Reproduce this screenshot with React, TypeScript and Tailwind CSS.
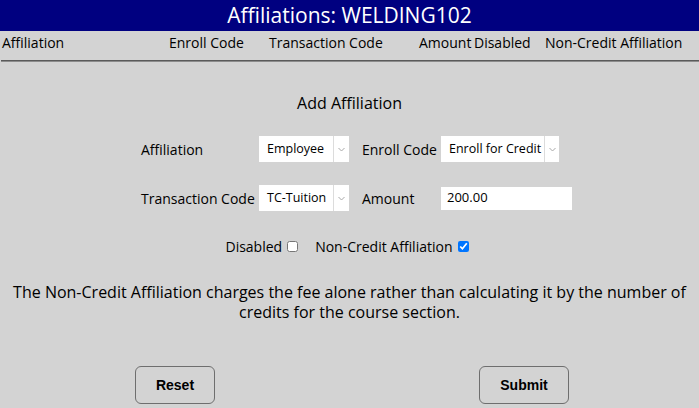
import React from "react";

const FONT = "font-['Open_Sans',sans-serif]";

function FakeSelect({ value, width, textWidth }: { value: string; width: string; textWidth: string }) {
  return (
    <div className={`flex h-[26px] ${width} bg-white`}>
      <div className={`${textWidth} flex items-center pl-[8px] text-[12.5px] text-black whitespace-nowrap overflow-hidden`}>
        {value}
      </div>
      <div className="flex flex-1 items-center justify-center border-l border-[#dcdcdc]">
        <svg width="7" height="5" viewBox="0 0 7 5" fill="none">
          <path d="M0.5 1L3.5 4L6.5 1" stroke="#a8a8a8" strokeWidth="1" />
        </svg>
      </div>
    </div>
  );
}

export default function App() {
  return (
    <div className={`w-[699px] h-[408px] bg-[#d3d3d3] text-black ${FONT} overflow-hidden`}>
      {/* title bar */}
      <div className="h-[31px] bg-[#000080] flex items-center justify-center">
        <span className="text-white text-[21px] leading-none">Affiliations: WELDING102</span>
      </div>

      {/* column headers */}
      <div className="flex h-[22px] items-center text-[14px] whitespace-nowrap">
        <span className="w-[169px] pl-[2px]">Affiliation</span>
        <span className="w-[100px]">Enroll Code</span>
        <span className="w-[150px]">Transaction Code</span>
        <span className="w-[55px]">Amount</span>
        <span className="w-[71px]">Disabled</span>
        <span>Non-Credit Affiliation</span>
      </div>
      <div className="mt-[7px] ml-[1px] h-[2px] bg-[#5a5a5a] border-b border-[#8c8c8c]" />

      <div className="mt-[30px] text-center text-[16px] leading-[22px]">Add Affiliation</div>

      {/* form grid */}
      <div className="mt-[22px] ml-[141px] grid grid-cols-[118px_103px_79px_auto] items-center gap-y-[23px] text-[14px]">
        <span>Affiliation</span>
        <FakeSelect value="Employee" width="w-[90px]" textWidth="w-[74px]" />
        <span>Enroll Code</span>
        <FakeSelect value="Enroll for Credit" width="w-[118px]" textWidth="w-[103px]" />

        <span>Transaction Code</span>
        <FakeSelect value="TC-Tuition" width="w-[90px]" textWidth="w-[74px]" />
        <span>Amount</span>
        <div className="w-[131px] h-[23px] bg-white flex items-center pl-[6px] text-[13px] font-medium">200.00</div>
      </div>

      {/* checkboxes */}
      <div className="mt-[25px] flex items-center justify-center text-[14px] pr-[5px]">
        <span>Disabled</span>
        <input type="checkbox" className="ml-[5px] w-[11px] h-[11px] m-0" readOnly />
        <span className="ml-[17px]">Non-Credit Affiliation</span>
        <input type="checkbox" className="ml-[5px] w-[11px] h-[11px] m-0" defaultChecked />
      </div>

      <p className="mt-[25px] px-[8px] text-center text-[16px] leading-[20px]">
        The Non-Credit Affiliation charges the fee alone rather than calculating it by the number of credits for the
        course section.
      </p>

      {/* buttons */}
      <div className="mt-[44px] flex font-['Liberation_Sans',Arial,sans-serif] font-bold text-[14px]">
        <button className="ml-[135px] w-[80px] h-[38px] rounded-[6px] border border-[#6e6e6e] bg-[#d3d3d3]">
          Reset
        </button>
        <button className="ml-[264px] w-[90px] h-[38px] rounded-[6px] border border-[#6e6e6e] bg-[#d3d3d3]">
          Submit
        </button>
      </div>
    </div>
  );
}
